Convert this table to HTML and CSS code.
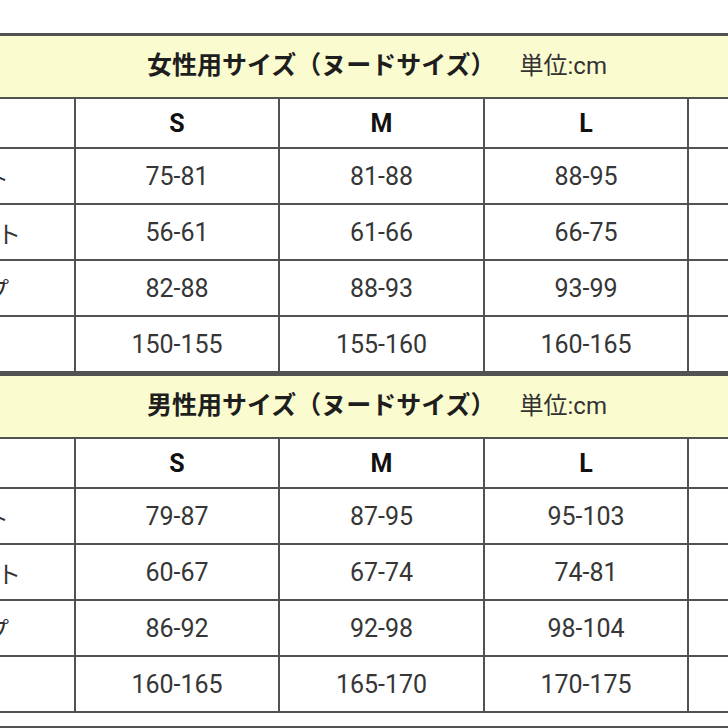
FILE: index.html
```html
<!DOCTYPE html>
<html lang="ja">
<head>
<meta charset="utf-8">
<link rel="stylesheet" href="styles.css">
</head>
<body>
<div class="page">
  <div class="chart">
    <div class="title"><span class="title-main">女性用サイズ（ヌードサイズ）</span><span class="unit">単位:cm</span></div>
    <div class="cell head"></div><div class="cell head">S</div><div class="cell head">M</div><div class="cell head">L</div><div class="cell head">XL</div>
    <div class="cell label">バスト</div><div class="cell">75-81</div><div class="cell">81-88</div><div class="cell">88-95</div><div class="cell">95-102</div>
    <div class="cell label">ウエスト</div><div class="cell">56-61</div><div class="cell">61-66</div><div class="cell">66-75</div><div class="cell">75-80</div>
    <div class="cell label">ヒップ</div><div class="cell">82-88</div><div class="cell">88-93</div><div class="cell">93-99</div><div class="cell">99-105</div>
    <div class="cell label">身長</div><div class="cell">150-155</div><div class="cell">155-160</div><div class="cell">160-165</div><div class="cell">165-170</div>
  </div>
  <div class="chart">
    <div class="title"><span class="title-main">男性用サイズ（ヌードサイズ）</span><span class="unit">単位:cm</span></div>
    <div class="cell head"></div><div class="cell head">S</div><div class="cell head">M</div><div class="cell head">L</div><div class="cell head">XL</div>
    <div class="cell label">バスト</div><div class="cell">79-87</div><div class="cell">87-95</div><div class="cell">95-103</div><div class="cell">103-111</div>
    <div class="cell label">ウエスト</div><div class="cell">60-67</div><div class="cell">67-74</div><div class="cell">74-81</div><div class="cell">81-88</div>
    <div class="cell label">ヒップ</div><div class="cell">86-92</div><div class="cell">92-98</div><div class="cell">98-104</div><div class="cell">104-110</div>
    <div class="cell label">身長</div><div class="cell">160-165</div><div class="cell">165-170</div><div class="cell">170-175</div><div class="cell">175-180</div>
  </div>
  <div class="chart next">
    <div class="title"><span class="title-main">サイズ表</span></div>
  </div>
</div>
</body>
</html>
```
FILE: styles.css
```css
html, body {
  margin: 0;
  padding: 0;
  background: #ffffff;
  overflow: hidden;
  width: 728px;
  height: 728px;
}

.page {
  padding-top: 33px;
  margin-left: -141px;
  width: 1040px;
  font-family: Roboto, "Noto Sans CJK JP", sans-serif;
}

.chart {
  display: grid;
  grid-template-columns: 215px 202px 203px 202px 202px;
  grid-template-rows: 61px 48px 54px 54px 54px 54px;
  gap: 2px;
  padding: 3px 0 2px 0;
  background: #525252;
  width: fit-content;
}

.chart.next {
  margin-top: 13px;
}

.title {
  grid-column: 1 / -1;
  background: #fbfbd0;
  display: flex;
  align-items: center;
  padding-left: 288px;
  padding-bottom: 7px;
  font-size: 25px;
  color: #1e1e1e;
}

.title-main {
  font-weight: 700;
  font-family: "Noto Sans CJK JP", sans-serif;
}

.unit {
  margin-left: 24px;
  font-weight: 400;
  font-size: 24px;
  color: #333;
  font-family: Roboto, "Noto Sans CJK JP", sans-serif;
}

.cell {
  background: #ffffff;
  display: flex;
  align-items: center;
  justify-content: center;
  font-size: 25px;
  color: #363636;
}

.cell.head {
  font-weight: 700;
  color: #111;
  font-size: 25px;
}

.cell.label {
  font-size: 24px;
  color: #333;
  padding-left: 13px;
  font-family: "Noto Sans CJK JP", sans-serif;
}
```
